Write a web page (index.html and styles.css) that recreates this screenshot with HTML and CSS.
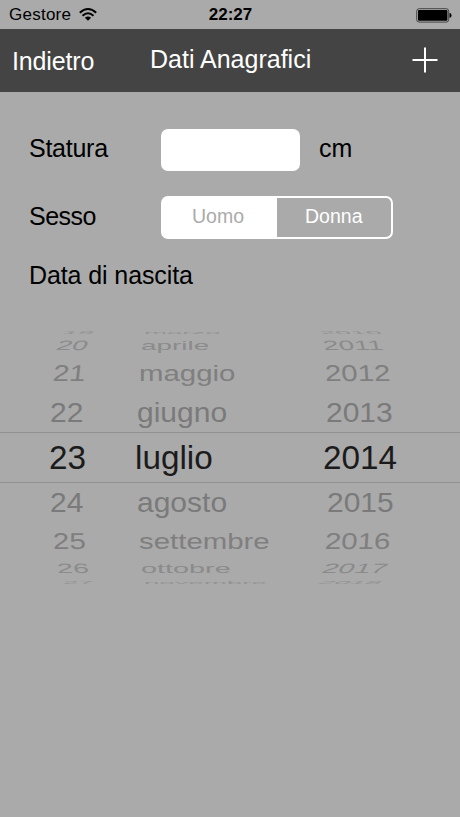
FILE: index.html
```
<!DOCTYPE html>
<html lang="it">
<head>
<meta charset="utf-8">
<title>Dati Anagrafici</title>
<link rel="stylesheet" href="styles.css">
</head>
<body>
<header class="status">
  <div class="carrier"><span>Gestore</span>
    <svg class="wifi" width="18" height="13" viewBox="0 0 18 13"><path d="M.8 4.8Q9-2.7 17.2 4.8M3.5 7.8Q9 2.6 14.5 7.8" fill="none" stroke="#000" stroke-width="2"/><path d="M5.9 9.8Q9 7 12.1 9.8L9 12.8Z"/></svg>
  </div>
  <time class="clock">22:27</time>
  <svg class="battery" width="36" height="15" viewBox="0 0 36 15"><rect x=".7" y=".7" width="32" height="13.4" rx="2.5" fill="none" stroke="#444" stroke-width="1"/><rect x="2" y="2" width="29.4" height="10.8" rx="1"/><path d="M33.5 5q2 0 2 2.4t-2 2.4z"/></svg>
</header>
<nav class="bar">
  <span class="back">Indietro</span>
  <h1 class="title">Dati Anagrafici</h1>
  <svg class="plus" width="26" height="26" viewBox="0 0 26 26"><path d="M.5 13H25.5M13 .5V25.5" stroke="#fff" stroke-width="2"/></svg>
</nav>
<main>
  <form class="form">
    <div class="row height"><label class="label" for="h">Statura</label><input class="field" id="h"><span>cm</span></div>
    <div class="row sex"><span class="label">Sesso</span><div class="segments"><span class="seg on">Uomo</span><span class="seg off">Donna</span></div></div>
    <div class="row birth">Data di nascita</div>
  </form>
  <section class="picker">
    <div class="line r19"><span>19</span><span>marzo</span><span>2010</span></div>
    <div class="line r20"><span>20</span><span>aprile</span><span>2011</span></div>
    <div class="line r21"><span>21</span><span>maggio</span><span>2012</span></div>
    <div class="line r22"><span>22</span><span>giugno</span><span>2013</span></div>
    <div class="line r23"><span>23</span><span>luglio</span><span>2014</span></div>
    <div class="line r24"><span>24</span><span>agosto</span><span>2015</span></div>
    <div class="line r25"><span>25</span><span>settembre</span><span>2016</span></div>
    <div class="line r26"><span>26</span><span>ottobre</span><span>2017</span></div>
    <div class="line r27"><span>27</span><span>novembre</span><span>2018</span></div>
  </section>
</main>
</body>
</html>
```
FILE: styles.css
```
* { box-sizing: border-box; }
body { margin: 0; width: 460px; height: 817px; overflow: hidden; background: #aaa; color: #000; font-family: "Liberation Sans", Arial, sans-serif; }
.status { height: 29px; display: grid; grid-template-columns: 1fr 60px 1fr; align-items: center; padding: 1px 8px 0 9px; font-size: 17px; }
.carrier { display: flex; align-items: center; gap: 8px; letter-spacing: .25px; }
.wifi { margin-top: -2px; }
.clock { font-weight: bold; text-align: center; }
.battery { justify-self: end; }
.bar { height: 63px; background: #444; color: #fff; display: grid; grid-template-columns: 138px 1fr 26px; padding: 0 22px 0 12px; align-items: center; font-size: 25px; }
.back { padding-top: 1px; letter-spacing: -.15px; }
.title { margin: 0; font-size: 25px; font-weight: normal; padding-bottom: 2px; }
.plus { margin-top: -1px; }
.form { padding: 36px 0 0 29px; font-size: 25px; }
.row { display: flex; align-items: center; }
.label { width: 132px; padding-bottom: 2px; letter-spacing: -.25px; }
.height { height: 43px; }
.height > span { padding-bottom: 2px; }
.field { width: 139px; height: 42px; border: 0; border-radius: 7px; background: #fff; margin: 0 19px 0 0; }
.sex { margin-top: 24px; height: 44px; }
.sex .label { letter-spacing: -.5px; }
.segments { display: flex; width: 231.5px; height: 43px; border: 2px solid #fff; border-radius: 7px; font-size: 19.5px; }
.seg { width: 114px; display: flex; align-items: center; justify-content: center; padding-bottom: 1px; }
.on { background: #fff; color: #aaa; padding-right: 4px; }
.off { color: #fff; flex: 1; }
.birth { height: 30px; margin-top: 21px; letter-spacing: -.1px; }
.picker { margin-top: 40px; height: 254px; overflow: hidden; color: #7a7a7a; font-size: 30px; white-space: nowrap; }

/* Each line of the drum sets its own height, column starts, squash and lean. */
.line { display: grid; height: var(--h); line-height: var(--h); padding-left: var(--a); grid-template-columns: var(--b) var(--c) 1fr; }
.line span { justify-self: start; transform-origin: 0 50%; transform: translateY(var(--y, 0px)) scale(var(--sx, 1), var(--sy, 1)) skewX(var(--skew, 0deg)); }
.line span:first-child { --skew: var(--l, 0deg); }
.line span:last-child { --skew: var(--r, 0deg); }
.r19 { --h: 6px; --a: 63px; --b: 81px; --c: 176px; --sx: .92; --sy: .14; --l: -12deg; --r: 12deg; color: #939393; }
.r20 { --h: 19px; --a: 57px; --b: 84px; --c: 182px; --sx: .93; --sy: .45; --l: -12deg; --r: 7deg; color: #8b8b8b; }
.r21 { --h: 36px; --a: 53px; --b: 86px; --c: 186px; --sx: .98; --sy: .76; --l: -5deg; --r: 3deg; color: #7f7f7f; }
.r22 { --h: 41px; --a: 50px; --b: 87px; --c: 189px; --sy: .95; --y: .7px; }
.r23 { --h: 49px; --a: 49px; --b: 86px; --c: 188px; height: 51px; border: solid #919191; border-width: 1px 0; font-size: 33.3px; color: #1b1b1b; }
.r24 { --h: 39px; --a: 50px; --b: 87px; --c: 190px; --sy: .95; }
.r25 { --h: 37px; --a: 53px; --b: 86px; --c: 186px; --sx: .98; --sy: .76; --y: 1px; --l: 2deg; --r: -3deg; color: #7f7f7f; }
.r26 { --h: 18px; --a: 57px; --b: 84px; --c: 182px; --sx: .96; --sy: .45; --l: 3deg; --r: -14deg; color: #8b8b8b; }
.r27 { --h: 9px; --a: 63px; --b: 81px; --c: 176px; --sx: .92; --sy: .14; --y: 1px; --r: -18deg; color: #939393; }
```
